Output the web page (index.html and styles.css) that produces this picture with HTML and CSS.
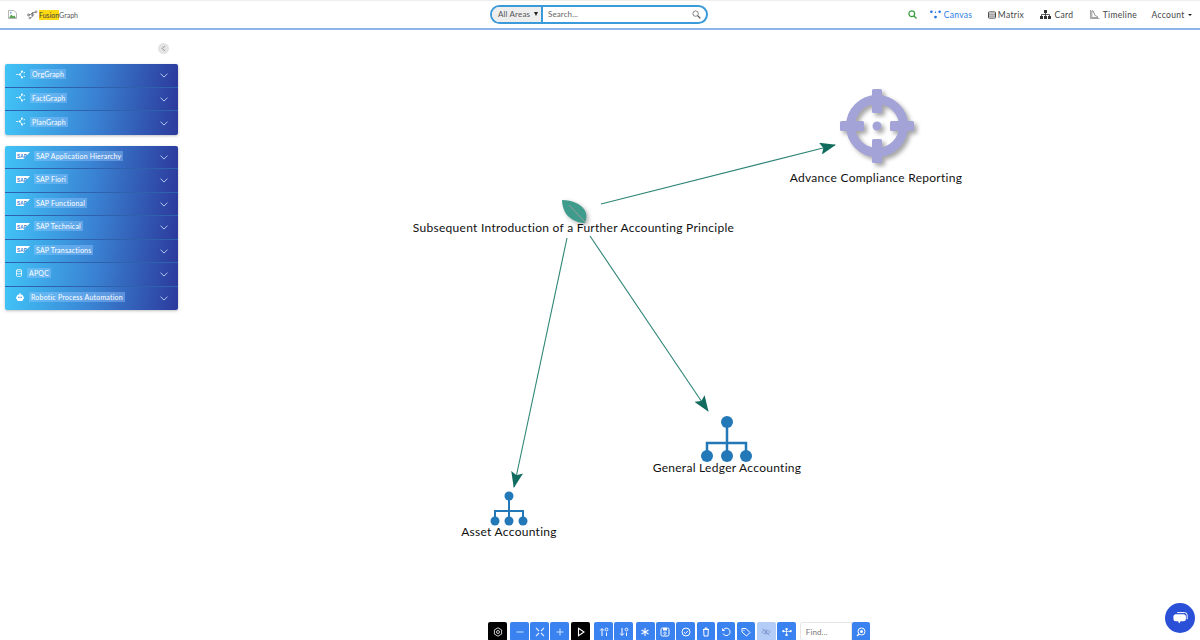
FILE: index.html
```html
<!DOCTYPE html>
<html lang="en">
<head>
<meta charset="utf-8">
<title>FusionGraph</title>
<link rel="stylesheet" href="styles.css">
</head>
<body>
<svg class="defs" width="0" height="0" aria-hidden="true">
  <defs>
    <symbol id="i-graph" viewBox="0 0 12 12"><g fill="none" stroke="#fff" stroke-width="1"><path d="M0 6h3.500M5 6l3-3.500M5 6l3 3.500"/></g><g fill="#fff"><circle cx="5" cy="6" r="1.200"/><circle cx="8" cy="2" r="1.300"/><circle cx="8" cy="10" r="1.300"/><circle cx="11" cy="3.500" r=".9"/><circle cx="11" cy="8.500" r=".9"/></g></symbol>
    <symbol id="i-sap" viewBox="0 0 14 7"><path d="M0 0h14L7.500 7H0z" fill="#fff"/><text x="1" y="5.600" class="sap-text">SAP</text></symbol>
    <symbol id="i-chev" viewBox="0 0 10 6"><path d="M1 1l4 4 4-4" fill="none" stroke="currentColor" stroke-width="1" stroke-linecap="round"/></symbol>
    <marker id="arrow" viewBox="0 0 16 12" refX="15" refY="6" markerWidth="16" markerHeight="12" markerUnits="userSpaceOnUse" orient="auto"><path d="M0 0L16 6L0 12L3 6z" fill="#116b5e"/></marker>
  </defs>
</svg>

<header class="topbar">
  <div class="brand">
    <svg class="broken" viewBox="0 0 10 10"><path d="M.5.5h6l3 3v6h-9z" fill="#fff" stroke="#a9a9a9"/><path d="M1.500 8l2-3 2 2 1.500-1 1.500 2v1h-7z" fill="#5aa457"/><circle cx="3" cy="3" r="1" fill="#7aa6e0"/></svg>
    <svg class="logo" viewBox="0 0 14 12"><g fill="none" stroke="#666" stroke-width=".9"><path d="M1 6.500h3l3-3h4M7 3.500v5l-3 2"/><circle cx="2" cy="6.500" r="1.300"/><circle cx="7" cy="6" r="1.500"/><circle cx="11.500" cy="2.500" r="1.200"/><circle cx="3.500" cy="10.500" r="1"/></g></svg>
    <span class="brand-name"><mark>Fusion</mark>Graph</span>
  </div>
  <form class="search">
    <span class="area">All Areas <i class="caret-dark"></i></span>
    <span class="search-input">Search...</span>
    <svg class="lens" viewBox="0 0 10 10"><circle cx="4" cy="4" r="3" fill="none" stroke="#777" stroke-width="1"/><path d="M6.400 6.400L9.300 9.300" stroke="#555" stroke-width="1.400"/></svg>
  </form>
  <nav class="nav">
    <svg class="nav-search" viewBox="0 0 10 10"><circle cx="4.200" cy="4.200" r="3.200" fill="none" stroke="#3c9b3c" stroke-width="1.400"/><path d="M6.600 6.600L9.400 9.400" stroke="#3c9b3c" stroke-width="1.500"/></svg>
    <a class="nav-item active"><svg class="nav-ic wide" viewBox="0 0 12 9"><g fill="#1f73e8"><circle cx="1.500" cy="1.500" r="1.400"/><circle cx="10.500" cy="1.500" r="1.400"/><circle cx="6" cy="7.300" r="1.500"/><circle cx="6" cy="2" r=".8"/></g></svg>Canvas</a>
    <a class="nav-item"><svg class="nav-ic" viewBox="0 0 9 8"><rect x=".5" y=".5" width="8" height="7" rx="1" fill="none" stroke="#333"/><path d="M.5 3h8M.5 5.200h8" stroke="#333" stroke-width=".8"/></svg>Matrix</a>
    <a class="nav-item"><svg class="nav-ic wide card-ic" viewBox="0 0 11 9"><g fill="#333"><rect x="4" y="0" width="3" height="3"/><rect x="0" y="6" width="3" height="3"/><rect x="4" y="6" width="3" height="3"/><rect x="8" y="6" width="3" height="3"/></g><path d="M5.500 3v3M1.500 6V4.500h8V6" fill="none" stroke="#333" stroke-width=".8"/></svg>Card</a>
    <a class="nav-item timeline"><svg class="nav-ic wide" viewBox="0 0 11 10"><path d="M1 0v9.500h10" fill="none" stroke="#999" stroke-width="1"/><path d="M2.500 1h1.500l2 5 3 1.500v1h-6.500z" fill="none" stroke="#777" stroke-width=".9"/></svg>Timeline</a>
    <a class="nav-item account">Account <i class="caret-dark small"></i></a>
  </nav>
</header>

<main class="main">
  <aside class="sidebar">
    <div class="collapse-row"><button class="collapse" type="button"><svg viewBox="0 0 6 8"><path d="M4.500 1L1.500 4l3 3" fill="none" stroke="#888" stroke-width="1.100"/></svg></button></div>
    <section class="panel">
      <div class="row"><svg class="ic g"><use href="#i-graph"/></svg><span class="lbl">OrgGraph</span><svg class="chev"><use href="#i-chev"/></svg></div>
      <div class="row"><svg class="ic g"><use href="#i-graph"/></svg><span class="lbl">FactGraph</span><svg class="chev"><use href="#i-chev"/></svg></div>
      <div class="row"><svg class="ic g"><use href="#i-graph"/></svg><span class="lbl">PlanGraph</span><svg class="chev"><use href="#i-chev"/></svg></div>
    </section>
    <section class="panel">
      <div class="row"><svg class="ic s"><use href="#i-sap"/></svg><span class="lbl">SAP Application Hierarchy</span><svg class="chev"><use href="#i-chev"/></svg></div>
      <div class="row"><svg class="ic s"><use href="#i-sap"/></svg><span class="lbl">SAP Fiori</span><svg class="chev"><use href="#i-chev"/></svg></div>
      <div class="row"><svg class="ic s"><use href="#i-sap"/></svg><span class="lbl">SAP Functional</span><svg class="chev"><use href="#i-chev"/></svg></div>
      <div class="row"><svg class="ic s"><use href="#i-sap"/></svg><span class="lbl">SAP Technical</span><svg class="chev"><use href="#i-chev"/></svg></div>
      <div class="row"><svg class="ic s"><use href="#i-sap"/></svg><span class="lbl">SAP Transactions</span><svg class="chev"><use href="#i-chev"/></svg></div>
      <div class="row"><svg class="ic d" viewBox="0 0 6 8"><g fill="none" stroke="#fff" stroke-width=".8"><ellipse cx="3" cy="1.300" rx="2.500" ry="1"/><path d="M.5 1.300v5.400c0 .6 1 1 2.500 1s2.500-.4 2.500-1V1.300M.5 4c0 .6 1 1 2.500 1s2.500-.4 2.500-1"/></g></svg><span class="lbl">APQC</span><svg class="chev"><use href="#i-chev"/></svg></div>
      <div class="row"><svg class="ic r" viewBox="0 0 8 8"><path d="M3.500 0h1v1.800h-1z" fill="#fff"/><rect x="1" y="1.500" width="6" height="6.500" rx="1.600" fill="#fff"/><rect y="3.500" width=".8" height="2.600" fill="#fff"/><rect x="7.200" y="3.500" width=".8" height="2.600" fill="#fff"/><circle cx="2.900" cy="4.200" r=".7" fill="#3b86d8"/><circle cx="5.100" cy="4.200" r=".7" fill="#3b86d8"/></svg><span class="lbl">Robotic Process Automation</span><svg class="chev"><use href="#i-chev"/></svg></div>
    </section>
  </aside>

  <div class="canvas">
    <svg class="graph" viewBox="183 30 1017 610">
      <g class="edges">
        <path d="M601 204L835 145" marker-end="url(#arrow)"/>
        <path d="M567 238L514 487" marker-end="url(#arrow)"/>
        <path d="M590 236L708 411" marker-end="url(#arrow)"/>
      </g>
      <g class="target">
        <circle cx="877" cy="126" r="26.500" fill="none" stroke="#a3a3d8" stroke-width="9"/>
        <rect x="872" y="89" width="10" height="24" rx="1.500" fill="#a3a3d8"/>
        <rect x="872" y="139" width="10" height="24" rx="1.500" fill="#a3a3d8"/>
        <rect x="840" y="121" width="24" height="10" rx="1.500" fill="#a3a3d8"/>
        <rect x="890" y="121" width="24" height="10" rx="1.500" fill="#a3a3d8"/>
        <circle cx="877" cy="126" r="4.500" fill="#a3a3d8"/>
      </g>
      <g class="leaf">
        <path d="M562 200C572 200 583 204 586 213C587 217 586 220 585 223C576 223 568 218 565 212C563 208 562 204 562 200z" fill="#3f9c8d"/>
        <path d="M569 205L585 222" stroke="#c99aa0" stroke-width=".7"/>
      </g>
      <g class="org" stroke="#2378b8" stroke-width="2.500" fill="none">
        <path d="M727 422V456M707 456V443H746V456"/>
        <g fill="#2378b8" stroke="none"><circle cx="727" cy="422" r="6"/><circle cx="707" cy="456" r="6"/><circle cx="727" cy="456" r="6"/><circle cx="746" cy="456" r="6"/></g>
      </g>
      <g class="org" stroke="#2378b8" stroke-width="2" fill="none">
        <path d="M509 496V521M495 521V511H523V521"/>
        <g fill="#2378b8" stroke="none"><circle cx="509" cy="496" r="4.500"/><circle cx="495" cy="521" r="4.500"/><circle cx="509" cy="521" r="4.500"/><circle cx="523" cy="521" r="4.500"/></g>
      </g>
      <g class="labels">
        <text x="876" y="182">Advance Compliance Reporting</text>
        <text x="573.500" y="232">Subsequent Introduction of a Further Accounting Principle</text>
        <text x="727" y="472">General Ledger Accounting</text>
        <text x="509" y="536">Asset Accounting</text>
      </g>
    </svg>
  </div>

  <div class="toolbar">
    <button class="tb black" type="button"><svg viewBox="0 0 10 10"><path d="M5 .8l3.600 2.100v4.200L5 9.200 1.400 7.100V2.900z" fill="none" stroke="#ccc"/><circle cx="5" cy="5" r="1.500" fill="none" stroke="#ccc"/></svg></button>
    <div class="tb-group">
      <button class="tb blue" type="button"><svg viewBox="0 0 10 10"><path d="M1.500 5h7" stroke="#cfe0ff" stroke-width="1"/></svg></button>
      <button class="tb blue" type="button"><svg viewBox="0 0 10 10"><path d="M1 1l3 3M9 1L6 4M1 9l3-3M9 9L6 6" stroke="#dbe7ff" stroke-width="1.200"/></svg></button>
      <button class="tb blue" type="button"><svg viewBox="0 0 10 10"><path d="M1.500 5h7M5 1.500v7" stroke="#cfe0ff" stroke-width="1"/></svg></button>
    </div>
    <button class="tb black tb-play" type="button"><svg viewBox="0 0 10 10"><path d="M2.500 1.200L8 5 2.500 8.800z" fill="none" stroke="#fff" stroke-width="1.100"/></svg></button>
    <div class="tb-group">
      <button class="tb blue" type="button"><svg viewBox="0 0 10 10"><path d="M3 9V2M1.200 3.500L3 1.500l1.800 2" fill="none" stroke="#fff"/><circle cx="7.500" cy="2.500" r="1.400" fill="none" stroke="#fff" stroke-width=".9"/><path d="M7.500 5.500v3.500" stroke="#fff"/></svg></button>
      <button class="tb blue" type="button"><svg viewBox="0 0 10 10"><path d="M3 1v7M1.200 6.500L3 8.500l1.800-2" fill="none" stroke="#fff"/><circle cx="7.500" cy="2.500" r="1.400" fill="none" stroke="#fff" stroke-width=".9"/><path d="M7.500 5.500v3.500" stroke="#fff"/></svg></button>
    </div>
    <div class="tb-tools">
      <button class="tb blue" type="button"><svg viewBox="0 0 10 10"><path d="M5 1v8M1.500 3l7 4M8.500 3l-7 4" stroke="#fff" stroke-width="1.100"/></svg></button>
      <button class="tb blue" type="button"><svg viewBox="0 0 10 10"><rect x="1" y="1" width="8" height="8" rx="1.500" fill="none" stroke="#fff"/><rect x="3" y="1" width="4" height="2.500" fill="#fff"/><circle cx="5" cy="6.200" r="1.200" fill="none" stroke="#fff" stroke-width=".8"/></svg></button>
      <button class="tb blue" type="button"><svg viewBox="0 0 10 10"><circle cx="5" cy="5" r="4" fill="none" stroke="#fff"/><path d="M3 5.200l1.500 1.300L7 3.800" fill="none" stroke="#fff" stroke-width=".9"/></svg></button>
      <button class="tb blue" type="button"><svg viewBox="0 0 10 10"><path d="M2 2.500h6M4 2.500V1h2v1.500M2.700 2.500L3 9h4l.3-6.500" fill="none" stroke="#fff"/></svg></button>
      <button class="tb blue" type="button"><svg viewBox="0 0 10 10"><path d="M2.500 2.500A3.700 3.700 0 1 1 2 6.500" fill="none" stroke="#fff"/><path d="M1.200 1v3h3z" fill="#fff"/></svg></button>
      <button class="tb blue" type="button"><svg viewBox="0 0 10 10"><path d="M1 1.500h4l4 4-3.500 3.500-4.500-4z" fill="none" stroke="#fff" stroke-linejoin="round"/><circle cx="3" cy="3.500" r=".6" fill="#fff"/></svg></button>
      <button class="tb pale" type="button"><svg viewBox="0 0 10 10"><path d="M.8 5C2.500 2.500 7.500 2.500 9.200 5 7.500 7.500 2.500 7.500.8 5z" fill="none" stroke="#7f98d0" stroke-width=".9"/><circle cx="5" cy="5" r="1.300" fill="#7f98d0"/><path d="M1.500 1.500l7 7" stroke="#7f98d0" stroke-width=".9"/></svg></button>
      <button class="tb blue" type="button"><svg viewBox="0 0 11 10"><g fill="#fff"><circle cx="1.500" cy="4" r="1.300"/><circle cx="5" cy="1.800" r="1.300"/><circle cx="5" cy="8.200" r="1.300"/><circle cx="9.500" cy="4" r="1.300"/></g><path d="M1.500 4.500h8M5 2v6" stroke="#fff" stroke-width=".8"/></svg></button>
    </div>
    <div class="find">
      <span class="find-input">Find...</span>
      <button class="tb blue" type="button"><svg viewBox="0 0 10 10"><circle cx="5.500" cy="4.500" r="3.500" fill="none" stroke="#fff"/><circle cx="5.500" cy="4.500" r="1.500" fill="#fff"/><path d="M3 7L1 9" stroke="#fff" stroke-width="1.300"/></svg></button>
    </div>
  </div>

  <button class="chat" type="button"><svg viewBox="0 0 18 16"><path d="M5 1.500h9a3 3 0 0 1 3 3v5" fill="none" stroke="#fff" stroke-width="1.200"/><path d="M3.500 3.500h9a3 3 0 0 1 3 3v2.500a3 3 0 0 1-3 3H9l-1.500 2.500L6 12H3.500a3 3 0 0 1-3-3V6.500a3 3 0 0 1 3-3z" fill="#fff"/></svg></button>
</main>
</body>
</html>
```

FILE: styles.css
```css
* { box-sizing: border-box; }
html, body { margin: 0; height: 100%; }
body {
  width: 1200px;
  height: 640px;
  overflow: hidden;
  background: #fff;
  color: #333;
  font-family: "Lato", "Liberation Sans", sans-serif;
  display: flex;
  flex-direction: column;
}
.defs { position: absolute; }
.sap-text { font: 700 4.600px "Liberation Sans", sans-serif; fill: #2f7fd6; }

.topbar {
  flex: none;
  height: 30px;
  border-top: 1px solid #eee;
  border-bottom: 2px solid #8fb4ea;
  display: grid;
  grid-template-columns: 490px 218px 1fr;
  align-items: center;
}
.brand { display: flex; align-items: center; padding-left: 8px; }
.broken { width: 9px; height: 9px; margin-right: 10px; }
.logo { width: 11px; height: 11px; margin-right: 1px; }
.brand-name { font-size: 7px; color: #555; }
.brand-name mark { background: #fcd910; color: #444; padding: 1px 0; }

.search {
  height: 19px;
  border: 2px solid #3b9ad9;
  border-radius: 10px;
  display: flex;
  align-items: center;
  overflow: hidden;
  font-size: 8px;
  margin-top: -1px;
}
.area {
  width: 51px;
  height: 100%;
  flex: none;
  background: #eee;
  color: #555;
  border-right: 2px solid #3b9ad9;
  padding: 0 3px 0 6px;
  display: flex;
  align-items: center;
  justify-content: space-between;
  letter-spacing: .15px;
}
.caret-dark {
  width: 0; height: 0;
  border-left: 2.500px solid transparent;
  border-right: 2.500px solid transparent;
  border-top: 4px solid #222;
}
.caret-dark.small { display: inline-block; margin-left: 1px; vertical-align: 2px; border-top-width: 2.500px; border-left-width: 2px; border-right-width: 2px; }
.search-input { flex: 1; padding-left: 5px; color: #666; letter-spacing: .1px; }
.lens { width: 9px; height: 9px; margin-right: 5px; }

.nav {
  display: flex;
  align-items: center;
  justify-content: flex-end;
  font-size: 8.500px;
  letter-spacing: .3px;
  color: #444;
  padding-right: 8px;
}
.nav-search { width: 9px; height: 9px; margin-right: 13px; }
.nav-item { display: flex; align-items: center; margin-right: 15.500px; white-space: nowrap; }
.nav-item.active { color: #2b7be6; }
.nav-item.timeline { margin-right: 14.500px; }
.nav-item.account { margin-right: 0; display: block; }
.nav-ic { width: 8px; height: 8px; margin-right: 2px; }
.nav-ic.wide { width: 11px; height: 9px; margin-right: 3px; }
.nav-ic.card-ic { margin-right: 4px; }

.main { flex: 1; min-height: 0; display: flex; position: relative; }
.sidebar { flex: none; width: 183px; padding: 0 5px; display: flex; flex-direction: column; gap: 11px; }
.collapse-row { height: 11px; margin-top: 13px; margin-bottom: -1px; display: flex; justify-content: flex-end; padding-right: 9px; }
.collapse {
  width: 11px; height: 11px;
  border: 0; padding: 2px 3px;
  border-radius: 50%;
  background: #e4e4e4;
  display: flex;
}
.collapse svg { width: 5px; height: 7px; }
.panel { box-shadow: 0 1px 3px rgba(0,0,0,.25); border-radius: 2px; overflow: hidden; }
.row {
  height: 23.500px;
  background: linear-gradient(100deg, #41c4f7 0%, #3a84d4 50%, #2c3a9c 100%);
  border-bottom: 1px solid #2f62ac;
  display: flex;
  align-items: center;
  padding: 0 10px 2px 11px;
  color: #fff;
  font-size: 7px;
  letter-spacing: .2px;
}
.row:last-child { border-bottom: 0; }
.lbl { background: rgba(150,200,255,.42); padding: 1px 2px; white-space: nowrap; }
.ic { flex: none; }
.ic.g { width: 9px; height: 9px; margin-right: 5px; }
.ic.s { width: 14px; height: 7px; margin-right: 4px; }
.ic.d { width: 6px; height: 8px; margin-right: 5px; }
.ic.r { width: 8px; height: 8px; margin-right: 5px; }
.chev { width: 8px; height: 5px; margin-left: auto; color: #d8e4ff; margin-top: 3px; flex: none; }

.canvas { flex: 1; min-width: 0; }
.graph { display: block; width: 100%; height: 100%; }
.edges path { fill: none; stroke: #2e8577; stroke-width: 1.100; }
.target { filter: drop-shadow(3px 3px 2px rgba(0,0,0,.35)); }
.leaf { filter: drop-shadow(2px 2px 2px rgba(0,0,0,.3)); }
.labels text {
  text-anchor: middle;
  font-size: 12px;
  letter-spacing: .28px;
  fill: #111;
}

.toolbar {
  position: absolute;
  left: 488px;
  bottom: -1px;
  display: flex;
  align-items: center;
  gap: 3px;
}
.tb-group { display: flex; gap: 1px; }
.tb-tools { display: flex; gap: 1.700px; }
.tb {
  width: 19px;
  height: 19px;
  padding: 0;
  border: 0;
  border-radius: 2px;
  display: flex;
  align-items: center;
  justify-content: center;
  flex: none;
}
.tb-tools .tb { width: 18.500px; }
.tb svg { width: 10px; height: 10px; }
.tb.black { background: #000; }
.tb.tb-play { margin: 0 1px 0 -1px; }
.tb.blue { background: #3a82f0; }
.tb.pale { background: #b4cdf6; }
.find { display: flex; margin-left: 1px; }
.find .tb { width: 18px; }
.find-input {
  width: 52px;
  height: 19px;
  border: 1px solid #e6e6e6;
  border-radius: 3px 0 0 3px;
  background: #fff;
  font-size: 8px;
  color: #777;
  padding: 4px 0 0 5px;
  letter-spacing: .1px;
}
.chat {
  position: absolute;
  right: 5px;
  bottom: 7px;
  width: 30px;
  height: 30px;
  border: 0;
  padding: 0;
  border-radius: 50%;
  background: #2b50d8;
  display: flex;
  align-items: center;
  justify-content: center;
}
.chat svg { width: 15px; height: 14px; }
```
